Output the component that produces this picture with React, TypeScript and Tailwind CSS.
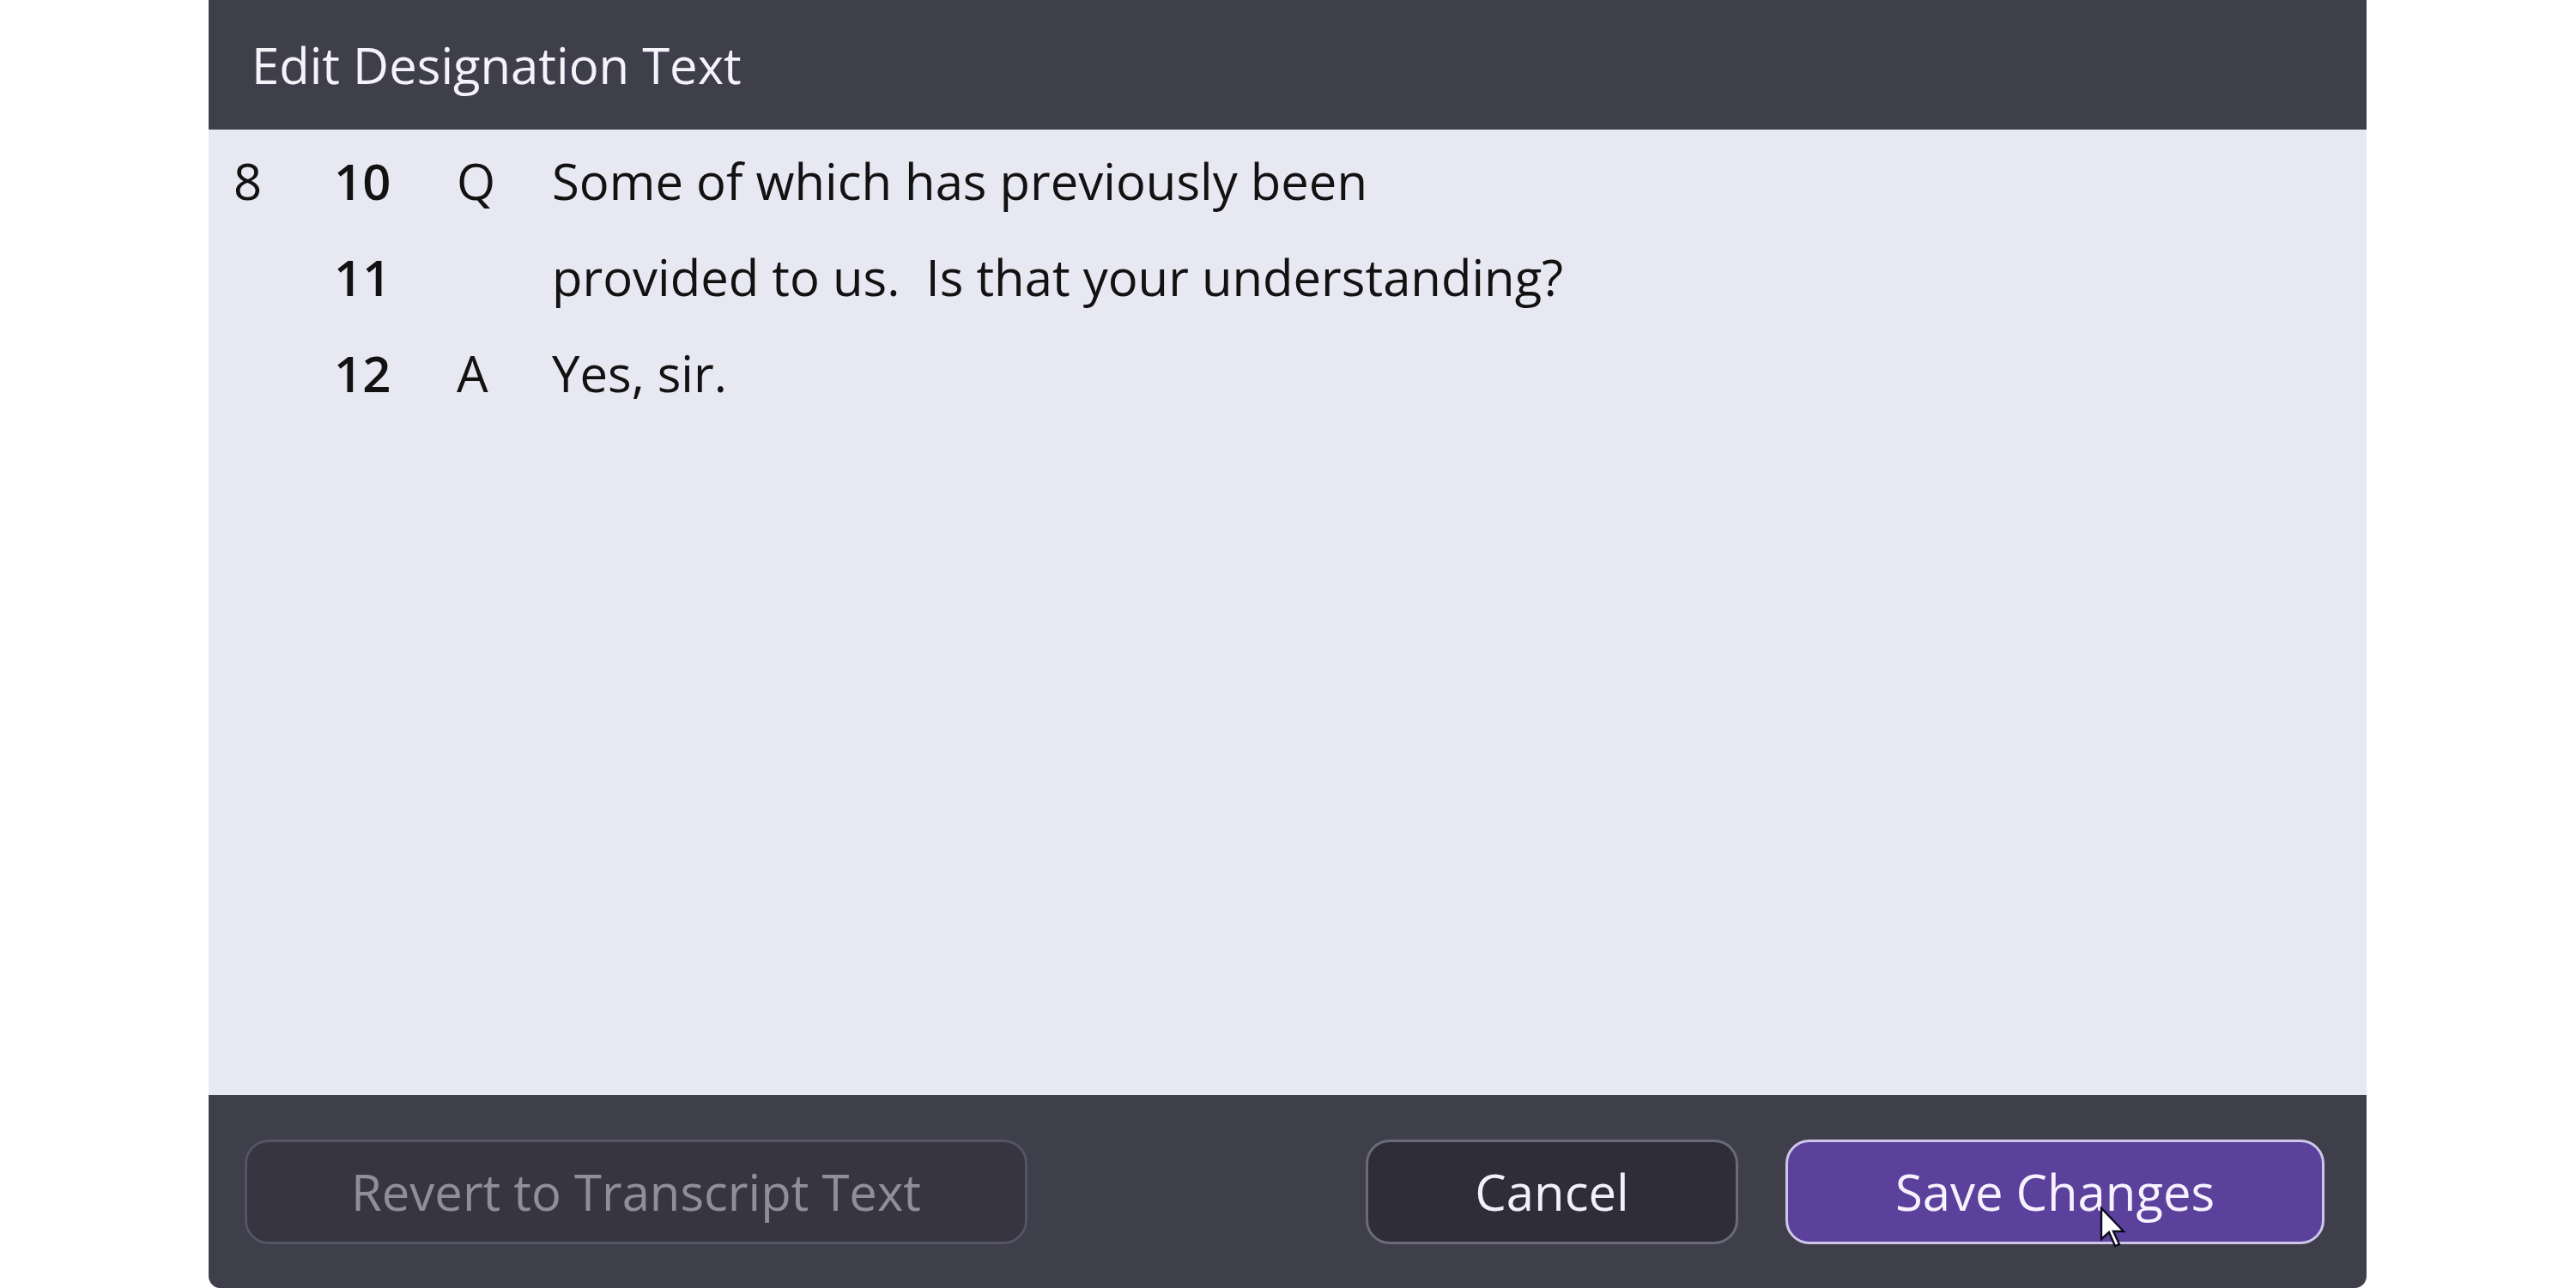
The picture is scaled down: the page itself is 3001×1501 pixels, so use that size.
import React from "react";

type Line = { page?: string; line: string; speaker?: string; text: string };

const lines: Line[] = [
  { page: "8", line: "10", speaker: "Q", text: "Some of which has previously been" },
  { line: "11", text: "provided to us.  Is that your understanding?" },
  { line: "12", speaker: "A", text: "Yes, sir." },
];

const Cursor: React.FC = () => (
  <svg
    className="absolute left-[2446px] top-[1406px] pointer-events-none"
    width="32"
    height="52"
    viewBox="0 0 16 26"
  >
    <path
      d="M1 1 L1 19 L5.5 15 L9 23 L11.5 22 L8 14.5 L14 14.5 Z"
      fill="#ffffff"
      stroke="#0d0b1e"
      strokeWidth="1.2"
      strokeLinejoin="miter"
    />
  </svg>
);

export default function App() {
  return (
    <div className="relative w-[3001px] h-[1501px] overflow-hidden bg-white font-['Open_Sans','Liberation_Sans',sans-serif]">
      <div className="ml-[243px] w-[2514px] h-[1501px] flex flex-col rounded-b-[14px] overflow-hidden">
        <div className="h-[151px] shrink-0 bg-[#3f3e4b] flex items-center pl-[50px]">
          <h1 className="text-[58px] leading-none text-[#f4f3f9]">Edit Designation Text</h1>
        </div>

        <div className="flex-1 bg-[#e8e8f2] pt-[3px] pl-[29px] text-[#121212]">
          {lines.map((l) => (
            <div key={l.line} className="h-[112px] flex items-center text-[58px]">
              <span className="w-[117px] shrink-0">{l.page ?? ""}</span>
              <span className="w-[143px] shrink-0 font-semibold">{l.line}</span>
              <span className="w-[111px] shrink-0">{l.speaker ?? ""}</span>
              <span className="whitespace-pre">{l.text}</span>
            </div>
          ))}
        </div>

        <div className="h-[225px] shrink-0 bg-[#3f3e4b] flex items-center pl-[42px] pr-[49px]">
          <button className="w-[912px] h-[122px] rounded-[28px] border-[3px] border-[#555463] bg-[#363541] text-[#8f8e9a] text-[58px]">
            Revert to Transcript Text
          </button>
          <div className="flex-1" />
          <button className="w-[434px] h-[122px] rounded-[28px] border-[3px] border-[#6b6a78] bg-[#2e2d38] text-[#f3f0fa] text-[58px]">
            Cancel
          </button>
          <button className="ml-[55px] w-[628px] h-[122px] rounded-[28px] border-[3px] border-[#cfc7e8] bg-[#5b419b] text-[#f6f2ff] text-[58px]">
            Save Changes
          </button>
        </div>
      </div>
      <Cursor />
    </div>
  );
}
